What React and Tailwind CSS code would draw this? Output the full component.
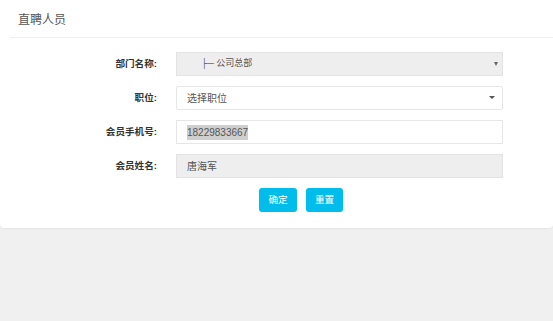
import React from "react";

const font = { fontFamily: '"Liberation Sans", Arial, "Noto Sans CJK SC", sans-serif' };

const Row = ({ label, children }) => (
  <div className="flex items-center h-[24px]">
    <div className="w-[158px] text-right text-[9.6px] font-bold text-[#333] pr-[1px]">{label}</div>
    <div className="ml-[18px] w-[327px] h-[24px] relative">{children}</div>
  </div>
);

export default function App() {
  return (
    <div className="min-h-[321px] bg-[#f0f0f0]" style={font}>
      <div className="bg-white h-[228px] rounded-b-[4px] shadow-[0_1px_2px_rgba(0,0,0,0.05)]">
        {/* Header */}
        <div className="ml-[10px] h-[38px] border-b border-[#eeeeee] flex items-center pl-[8px] pt-[3px]">
          <span className="text-[12px] text-[#555]">直聘人员</span>
        </div>

        {/* Form */}
        <div className="pt-[14px] flex flex-col gap-[10px]">
          <Row label="部门名称:">
            <div className="h-full bg-[#eeeeee] border border-[#e3e3e3] flex items-center pl-[24px] text-[9px] text-[#555]">
              ├─ 公司总部
            </div>
            <span className="absolute right-[5px] top-[10px] w-0 h-0 border-l-[2.5px] border-r-[2.5px] border-t-[4px] border-l-transparent border-r-transparent border-t-[#666]"></span>
          </Row>
          <Row label="职位:">
            <div className="h-full bg-white border border-[#e5e6e7] rounded-[2px] flex items-center pl-[10px] text-[10px] text-[#555]">
              选择职位
            </div>
            <span className="absolute right-[8px] top-[10px] w-0 h-0 border-l-[3px] border-r-[3px] border-t-[3px] border-l-transparent border-r-transparent border-t-[#555]"></span>
          </Row>
          <Row label="会员手机号:">
            <div className="h-full bg-white border border-[#e5e6e7] flex items-center pl-[10px] text-[10px] text-[#555]">
              <span className="bg-[#cfcfcf]">18229833667</span>
            </div>
          </Row>
          <Row label="会员姓名:">
            <div className="h-full bg-[#eeeeee] border border-[#e3e3e3] flex items-center pl-[10px] text-[10px] text-[#555]">
              唐海军
            </div>
          </Row>
          <div className="flex gap-[9px] pl-[259px]">
            <button className="w-[38px] h-[24px] rounded-[3px] bg-[#00bdec] text-white text-[9.6px] font-normal">确定</button>
            <button className="w-[37px] h-[24px] rounded-[3px] bg-[#00bdec] text-white text-[9.6px] font-normal">重置</button>
          </div>
        </div>
      </div>
    </div>
  );
}
